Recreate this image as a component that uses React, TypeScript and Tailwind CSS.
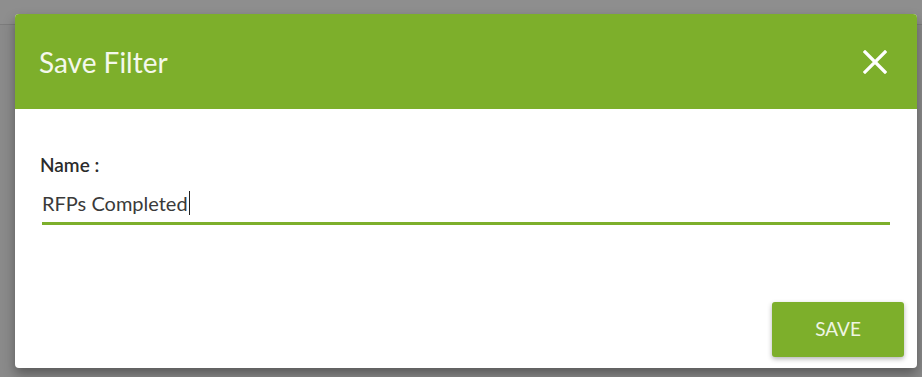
import React from 'react';

const CloseIcon = () => (
  <svg width="24" height="24" viewBox="0 0 24 24" fill="none">
    <path d="M2 2 L22 22 M22 2 L2 22" stroke="#ffffff" strokeWidth="3.2" strokeLinecap="square" />
  </svg>
);

const SaveFilterDialog = () => {
  const name = 'RFPs Completed';

  return (
    <div className="ml-[15px] mt-[13px] w-[902px] h-[354px] rounded-[4px] bg-white overflow-hidden flex flex-col shadow-[0_6px_12px_rgba(0,0,0,0.35)]">
      <div className="h-[95px] shrink-0 bg-[#7daf2b] flex items-center justify-between pl-[24px] pr-[30px]">
        <h2 className="text-[28px] text-[#f4f8ec] leading-none">Save Filter</h2>
        <button className="p-0">
          <CloseIcon />
        </button>
      </div>

      <div className="flex-1 flex flex-col pl-[25px] pr-[27px] pt-[44px] pb-[11px]">
        <label className="text-[19px] font-semibold text-[#2b2b2b] leading-[23px]">Name :</label>
        <div className="mt-[13px] ml-[2px] border-b-[3px] border-[#7daf2b] h-[36px] flex items-center pb-[6px]">
          <span className="text-[20px] text-[#3a3a3a] leading-none">{name}</span>
          <span className="ml-px w-px h-[24px] bg-[#222]" />
        </div>

        <div className="mt-auto flex justify-end">
          <button className="mr-[-14px] w-[132px] h-[55px] rounded-[3px] bg-[#7daf2b] text-[19px] text-[#eef5e2] shadow-[0_2px_5px_rgba(0,0,0,0.3)]">
            SAVE
          </button>
        </div>
      </div>
    </div>
  );
};

const App = () => {
  return (
    <div className="w-[922px] h-[377px] bg-[#8a8a8a] relative overflow-hidden font-['Source_Sans_Pro','Lato',sans-serif]">
      <div className="absolute left-0 top-0 w-full h-[25px] bg-[#8e8e8e] border-b border-[#7c7c7c]" />
      <div className="relative pt-px">
        <SaveFilterDialog />
      </div>
    </div>
  );
};

export default App;
